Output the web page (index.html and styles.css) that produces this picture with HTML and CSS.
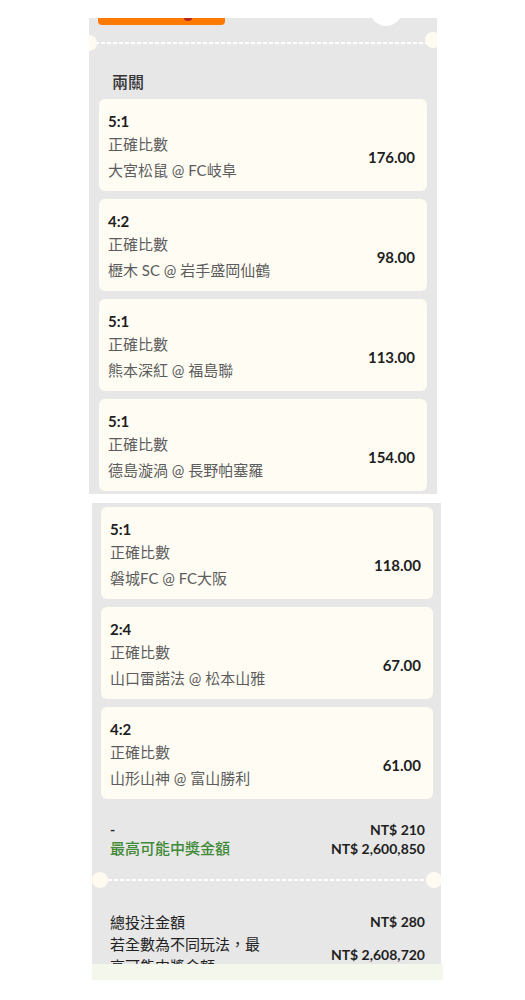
FILE: index.html
```html
<!DOCTYPE html>
<html lang="zh-Hant">
  <head>
    <meta charset="utf-8" />
    <link rel="stylesheet" href="styles.css">
  </head>
  <body>
    <!-- Haut du coupon -->
    <section class="sheet sheet-top">
      <div class="cta-bar"><span class="cta-dot"></span></div>
      <span class="notch"></span>
      <div class="tear">
        <span class="hole hole-l"></span>
        <div class="tear-line"></div>
        <span class="hole hole-r"></span>
      </div>
      <h3 class="leg-title">兩關</h3>
      <div class="bet-list">
        <div class="bet-card">
          <span class="bet-score">5:1</span>
          <span class="bet-type">正確比數</span>
          <span class="bet-match">大宮松鼠 @ FC岐阜</span>
          <span class="bet-odds">176.00</span>
        </div>
        <div class="bet-card">
          <span class="bet-score">4:2</span>
          <span class="bet-type">正確比數</span>
          <span class="bet-match">櫪木 SC @ 岩手盛岡仙鶴</span>
          <span class="bet-odds">98.00</span>
        </div>
        <div class="bet-card">
          <span class="bet-score">5:1</span>
          <span class="bet-type">正確比數</span>
          <span class="bet-match">熊本深紅 @ 福島聯</span>
          <span class="bet-odds">113.00</span>
        </div>
        <div class="bet-card">
          <span class="bet-score">5:1</span>
          <span class="bet-type">正確比數</span>
          <span class="bet-match">德島漩渦 @ 長野帕塞羅</span>
          <span class="bet-odds">154.00</span>
        </div>
      </div>
    </section>

    <!-- Bas du coupon -->
    <section class="sheet sheet-bottom">
      <div class="bet-list">
        <div class="bet-card">
          <span class="bet-score">5:1</span>
          <span class="bet-type">正確比數</span>
          <span class="bet-match">磐城FC @ FC大阪</span>
          <span class="bet-odds">118.00</span>
        </div>
        <div class="bet-card">
          <span class="bet-score">2:4</span>
          <span class="bet-type">正確比數</span>
          <span class="bet-match">山口雷諾法 @ 松本山雅</span>
          <span class="bet-odds">67.00</span>
        </div>
        <div class="bet-card">
          <span class="bet-score">4:2</span>
          <span class="bet-type">正確比數</span>
          <span class="bet-match">山形山神 @ 富山勝利</span>
          <span class="bet-odds">61.00</span>
        </div>
      </div>

      <div class="summary">
        <div class="summary-row">
          <span class="summary-dash">-</span>
          <span class="amount">NT$ 210</span>
        </div>
        <div class="summary-row">
          <span class="summary-win">最高可能中獎金額</span>
          <span class="amount">NT$ 2,600,850</span>
        </div>
      </div>

      <div class="tear tear-inset">
        <span class="hole hole-l"></span>
        <div class="tear-line"></div>
        <span class="hole hole-r"></span>
      </div>

      <div class="totals">
        <div class="totals-row">
          <span class="totals-label">總投注金額</span>
          <span class="amount">NT$ 280</span>
        </div>
        <div class="totals-row totals-wrap">
          <span class="totals-label">若全數為不同玩法，最高可能中獎金額:</span>
          <span class="amount">NT$ 2,608,720</span>
        </div>
      </div>
    </section>
    <div class="footer-strip"></div>
  </body>
</html>
```

FILE: styles.css
```css
body {
  margin: 0;
  background: #fff;
  font-family: Lato, "Noto Sans CJK TC", sans-serif;
  font-size: 15px;
  color: #222;
}

.sheet {
  position: relative;
  overflow: hidden;
  background: #e7e7e7;
  box-sizing: border-box;
}

.sheet-top {
  margin: 18px 0 0 89px;
  width: 348px;
  height: 476px;
}

.sheet-bottom {
  margin: 9px 0 0 92px;
  width: 349px;
  height: 461px;
  padding-top: 4px;
}

/* Bouton orange coupé en haut */
.cta-bar {
  position: relative;
  margin-left: 9px;
  width: 127px;
  height: 7px;
  background: #ff7a00;
  border-radius: 0 0 4px 4px;
}

.cta-dot {
  position: absolute;
  left: 86px;
  top: -3px;
  width: 8px;
  height: 6px;
  border-radius: 50%;
  background: #b3261e;
}

.notch {
  position: absolute;
  top: -24px;
  left: 281px;
  width: 32px;
  height: 32px;
  border-radius: 50%;
  background: #fff;
}

/* Ligne pointillée */
.tear {
  position: relative;
  display: flex;
  align-items: center;
  height: 16px;
  margin-top: 10px;
  padding: 0 9px 0 6px;
}

.tear-line {
  flex: 1;
  height: 2px;
  background: repeating-linear-gradient(90deg, #fff 0 4px, transparent 4px 6px);
}

.hole {
  position: absolute;
  top: 0;
  width: 16px;
  height: 16px;
  border-radius: 50%;
  background: #fffbf1;
}

.hole-l {
  left: -8px;
}

.hole-r {
  right: -4px;
  top: -3px;
}

.tear-inset {
  margin-top: 14px;
  padding: 0 15px 0 16px;
}

.tear-inset .hole-l {
  left: 0;
}

.tear-inset .hole-r {
  right: -1px;
  top: 0;
}

.leg-title {
  margin: 20px 0 6px 23px;
  font-size: 16px;
  line-height: 22px;
  font-weight: 500;
  color: #333;
}

/* Cartes de paris */
.bet-list {
  display: flex;
  flex-direction: column;
  gap: 8px;
  margin: 0 10px;
}

.sheet-bottom .bet-list {
  margin: 0 8px 0 9px;
}

.bet-card {
  display: grid;
  grid-template-columns: 1fr auto;
  grid-template-rows: 20px 26px 26px;
  padding: 12px 12px 8px 9px;
  background: #fffcf4;
  border-radius: 6px;
}

.bet-score {
  font-weight: 700;
  color: #1f1f1f;
  line-height: 20px;
}

.bet-type,
.bet-match {
  grid-column: 1;
  color: #5c5c5c;
  line-height: 26px;
}

.bet-odds {
  grid-column: 2;
  grid-row: 2 / 4;
  align-self: center;
  font-weight: 700;
  color: #1f1f1f;
}

/* Résumé */
.summary {
  margin-top: 21px;
  padding: 0 16px 0 18px;
}

.summary-row,
.totals-row {
  display: flex;
  justify-content: space-between;
  align-items: center;
  line-height: 19px;
}

.summary-dash {
  font-weight: 700;
  font-size: 14px;
}

.summary-win {
  color: #3f8a36;
  font-weight: 500;
}

.amount {
  font-size: 14px;
  font-weight: 700;
  color: #1f1f1f;
}

.totals {
  margin-top: 24px;
  padding: 0 16px 0 18px;
}

.totals-row {
  line-height: 20px;
}

.totals-wrap {
  line-height: 22px;
  margin-top: 1px;
}

.totals-wrap .totals-label {
  max-width: 156px;
}

.totals-label {
  color: #222;
}

.footer-strip {
  margin-left: 92px;
  width: 351px;
  height: 16px;
  background: #f4f7eb;
}
```
